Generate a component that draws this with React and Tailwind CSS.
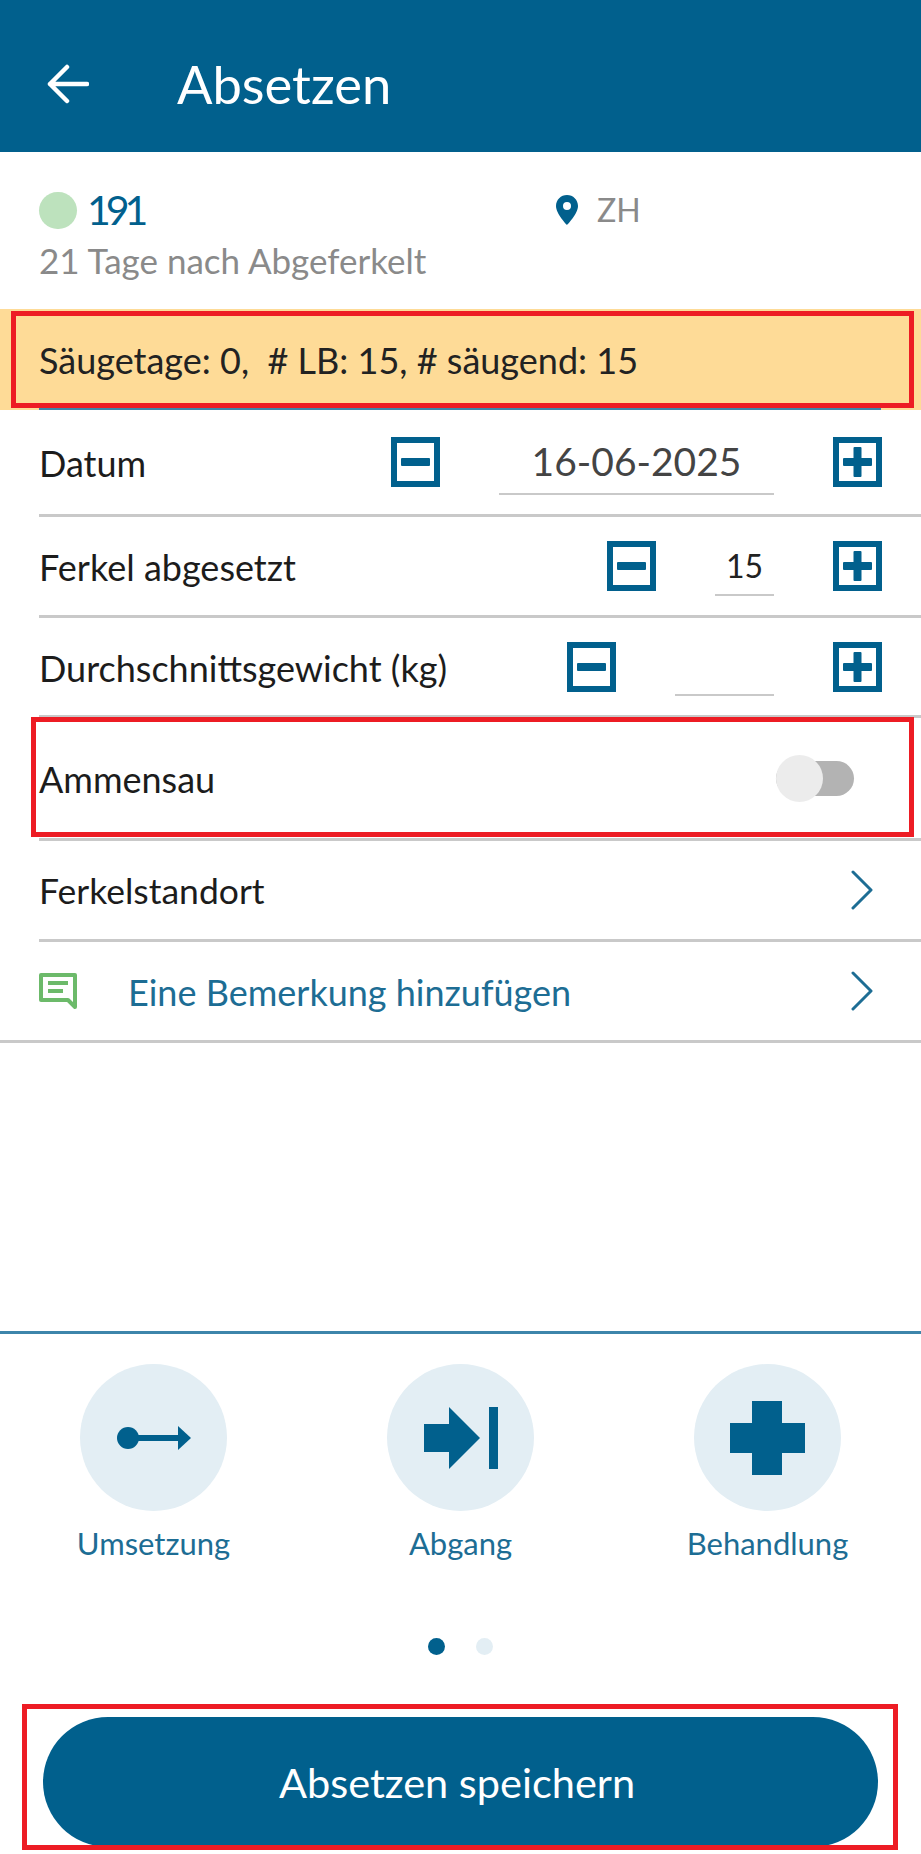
import React from "react";

const BLUE = "#01608d";

const MinusIcon = () => (
  <svg width="49" height="50" viewBox="0 0 49 50" className="shrink-0">
    <rect x="3" y="3" width="43" height="44" fill="#fff" stroke={BLUE} strokeWidth="6" />
    <rect x="10" y="21" width="29" height="8" rx="1" fill={BLUE} />
  </svg>
);

const PlusIcon = () => (
  <svg width="49" height="50" viewBox="0 0 49 50" className="shrink-0">
    <rect x="3" y="3" width="43" height="44" fill="#fff" stroke={BLUE} strokeWidth="6" />
    <rect x="10" y="21" width="29" height="8" rx="1" fill={BLUE} />
    <rect x="20.5" y="10" width="8" height="30" rx="1" fill={BLUE} />
  </svg>
);

const Chevron = () => (
  <svg width="24" height="40" viewBox="0 0 24 40" fill="none" className="shrink-0">
    <path d="M3 2 L21 20 L3 38" stroke="#1d6d94" strokeWidth="3" strokeLinecap="round" strokeLinejoin="round" />
  </svg>
);

const StepperRow = ({ label, value, inputClass, valueClass, height }) => (
  <div className={`ml-[39px] flex items-center justify-between border-b-[3px] border-[#c9c9c9] pr-[39px] ${height}`}>
    <span className="mt-[2px] text-[36px] text-[#1c1c1c]">{label}</span>
    <div className="flex items-center gap-[59px]">
      <MinusIcon />
      <div className={`flex h-[58px] items-center justify-center border-b-2 border-[#c9c9c9] ${inputClass}`}>
        <span className={valueClass}>{value}</span>
      </div>
      <PlusIcon />
    </div>
  </div>
);

const ActionItem = ({ label, children }) => (
  <div className="flex w-[147px] flex-col items-center">
    <div className="flex h-[147px] w-[147px] items-center justify-center rounded-full bg-[#e3eef4]">
      {children}
    </div>
    <span className="mt-[15px] whitespace-nowrap text-[31px] leading-[34px] text-[#1d6d94]">{label}</span>
  </div>
);

export default function App() {
  return (
    <div className="relative flex h-[1854px] w-[921px] flex-col overflow-hidden bg-white font-['Lato',sans-serif]">
      {/* header */}
      <div className="flex h-[152px] shrink-0 items-center bg-[#01608d] pl-[47px] pt-[16px]">
        <svg width="42" height="40" viewBox="0 0 42 40" fill="none">
          <path d="M40 20 H3 M20 3 L3 20 L20 37" stroke="#fff" strokeWidth="4.5" strokeLinecap="round" strokeLinejoin="round" />
        </svg>
        <span className="ml-[88px] text-[52.5px] text-white">Absetzen</span>
      </div>

      {/* sow info */}
      <div className="h-[157px] shrink-0 pl-[39px] pt-[34px]">
        <div className="flex items-center">
          <span className="h-[37px] w-[38px] rounded-full bg-[#bde2bd]" />
          <span className="ml-[10px] w-[469px] text-[41px] leading-[48px] tracking-[-5px] text-[#01608d]">191</span>
          <svg width="22" height="30" viewBox="0 0 22 30">
            <path fillRule="evenodd" d="M11 0 C4.9 0 0 4.9 0 11 C0 19 11 30 11 30 C11 30 22 19 22 11 C22 4.9 17.1 0 11 0 Z M11 7 A4 4 0 1 1 11 15 A4 4 0 1 1 11 7 Z" fill="#01608d" />
          </svg>
          <span className="ml-[19px] text-[32px] text-[#8a8a8a]">ZH</span>
        </div>
        <div className="mt-[6px] text-[35px] leading-[40px] text-[#8a8a8a]">21 Tage nach Abgeferkelt</div>
      </div>

      {/* banner */}
      <div className="relative flex h-[101px] shrink-0 items-center bg-[#fedb97] pl-[39px]">
        <span className="text-[36px] text-[#222]">Säugetage: 0,&nbsp; # LB: 15, # säugend: 15</span>
        <div className="absolute bottom-0 left-[39px] right-[40px] h-[3px] bg-[#3d85ab]" />
      </div>

      <StepperRow height="h-[107px]" label="Datum" value="16-06-2025" inputClass="mt-[8px] w-[275px] pb-[7px]" valueClass="text-[39px] text-[#444]" />
      <StepperRow height="h-[101px]" label="Ferkel abgesetzt" value="15" inputClass="mt-[1px] w-[59px]" valueClass="text-[32px] text-[#222]" />
      <StepperRow height="h-[100px]" label="Durchschnittsgewicht (kg)" value="" inputClass="mt-[1px] w-[99px]" valueClass="" />

      <div className="ml-[39px] flex h-[123px] items-center justify-between border-b-[3px] border-[#c9c9c9] pr-[67px]">
        <span className="mt-[2px] text-[36px] text-[#1c1c1c]">Ammensau</span>
        <div className="relative h-[35px] w-[78px] rounded-full bg-[#b3b3b3]">
          <span className="absolute -top-[6px] left-0 h-[47px] w-[47px] rounded-full bg-[#ececec]" />
        </div>
      </div>

      <div className="ml-[39px] flex h-[101px] items-center justify-between border-b-[3px] border-[#c9c9c9] pr-[47px]">
        <span className="mt-[2px] text-[35.5px] text-[#1c1c1c]">Ferkelstandort</span>
        <Chevron />
      </div>

      <div className="flex h-[101px] items-center justify-between border-b-[3px] border-[#c9c9c9] pl-[39px] pr-[47px]">
        <div className="flex items-center">
          <svg width="38" height="36" viewBox="0 0 38 36" fill="none">
            <path d="M2 2 H36 V34 L29 27 H2 Z" stroke="#6cba6a" strokeWidth="4" strokeLinejoin="round" />
            <path d="M9 10 H29 M9 18 H24" stroke="#6cba6a" strokeWidth="4" />
          </svg>
          <span className="ml-[51px] mt-[2px] text-[36px] text-[#1d6d94]">Eine Bemerkung hinzufügen</span>
        </div>
        <Chevron />
      </div>

      {/* quick actions */}
      <div className="mt-[288px] flex h-[386px] shrink-0 flex-col border-t-[3px] border-[#3d85ab]">
        <div className="mt-[30px] flex justify-between pl-[80px] pr-[80px]">
          <ActionItem label="Umsetzung">
            <svg width="74" height="24" viewBox="0 0 74 24" fill={BLUE}>
              <circle cx="11" cy="12" r="11" />
              <rect x="11" y="9" width="52" height="6" />
              <path d="M61 0 L74 12 L61 24 Z" />
            </svg>
          </ActionItem>
          <ActionItem label="Abgang">
            <svg width="74" height="62" viewBox="0 0 74 62" fill={BLUE}>
              <path d="M0 17 H25 V0 L56 31 L25 62 V45 H0 Z" />
              <rect x="65" y="0" width="9" height="62" />
            </svg>
          </ActionItem>
          <ActionItem label="Behandlung">
            <svg width="75" height="74" viewBox="0 0 75 74" fill={BLUE}>
              <path d="M22 0 H52 V22 H75 V52 H52 V74 H22 V52 H0 V22 H22 Z" />
            </svg>
          </ActionItem>
        </div>
        <div className="mt-[78px] flex justify-center gap-[31px] pr-[1px]">
          <span className="h-[17px] w-[17px] rounded-full bg-[#01608d]" />
          <span className="h-[17px] w-[17px] rounded-full bg-[#e3eef4]" />
        </div>
      </div>

      {/* save button */}
      <div className="px-[43px]">
        <div className="flex h-[130px] items-center justify-center rounded-full bg-[#01608d] pr-[7px]">
          <span className="text-[41.5px] text-white">Absetzen speichern</span>
        </div>
      </div>

      {/* red annotation boxes */}
      <div className="absolute left-[11px] top-[311px] h-[97px] w-[903px] border-[5px] border-[#ed1c24]" />
      <div className="absolute left-[31px] top-[717px] h-[120px] w-[883px] border-[5px] border-[#ed1c24]" />
      <div className="absolute left-[22px] top-[1704px] h-[146px] w-[876px] border-[5px] border-[#ed1c24]" />
    </div>
  );
}
